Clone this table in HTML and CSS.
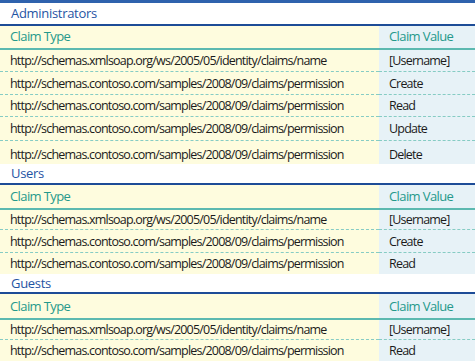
FILE: index.html
```html
<!DOCTYPE html>
<html lang="en">
	<head>
		<meta charset="UTF-8"/>
		<title>Claims</title>
		<link rel="stylesheet" href="styles.css">
	</head>
	<body>
	  <table class="claims">
		<tr class="title t1"><td colspan="2">Administrators</td></tr>
		<tr class="colhead c1"><td class="type">Claim Type</td><td class="value">Claim Value</td></tr>
		<tr class="h23"><td class="type">http://schemas.xmlsoap.org/ws/2005/05/identity/claims/name</td><td class="value">[Username]</td></tr>
		<tr class="h23"><td class="type">http://schemas.contoso.com/samples/2008/09/claims/permission</td><td class="value">Create</td></tr>
		<tr class="h22"><td class="type">http://schemas.contoso.com/samples/2008/09/claims/permission</td><td class="value">Read</td></tr>
		<tr class="h24"><td class="type">http://schemas.contoso.com/samples/2008/09/claims/permission</td><td class="value">Update</td></tr>
		<tr class="h23 last low"><td class="type">http://schemas.contoso.com/samples/2008/09/claims/permission</td><td class="value">Delete</td></tr>

		<tr class="title t2"><td colspan="2">Users</td></tr>
		<tr class="colhead c2"><td class="type">Claim Type</td><td class="value">Claim Value</td></tr>
		<tr class="h21"><td class="type">http://schemas.xmlsoap.org/ws/2005/05/identity/claims/name</td><td class="value">[Username]</td></tr>
		<tr class="h23"><td class="type">http://schemas.contoso.com/samples/2008/09/claims/permission</td><td class="value">Create</td></tr>
		<tr class="h21 last"><td class="type">http://schemas.contoso.com/samples/2008/09/claims/permission</td><td class="value">Read</td></tr>

		<tr class="title t3"><td colspan="2">Guests</td></tr>
		<tr class="colhead c3"><td class="type">Claim Type</td><td class="value">Claim Value</td></tr>
		<tr class="h21"><td class="type">http://schemas.xmlsoap.org/ws/2005/05/identity/claims/name</td><td class="value">[Username]</td></tr>
		<tr class="h22 last"><td class="type">http://schemas.contoso.com/samples/2008/09/claims/permission</td><td class="value">Read</td></tr>
	  </table>
	</body>
</html>
```

FILE: styles.css
```css
* {
  box-sizing: border-box;
}
body {
  margin: 0;
  background: #fff;
  overflow: hidden;
}
.claims {
  width: 475px;
  border-collapse: collapse;
  border-top: 3px solid #2f62ad;
  font-family: "Open Sans", sans-serif;
  font-size: 12.5px;
  letter-spacing: -0.8px;
  color: #1b1b1b;
}
td {
  padding: 0;
  white-space: nowrap;
  vertical-align: middle;
}
.type {
  width: 379px;
  padding-left: 10px;
  background-color: #fefcde;
  background-image: radial-gradient(#f1d6cf 0.5px, transparent 0.7px);
  background-size: 4px 4px;
}
.value {
  padding-left: 10px;
  background-color: #e7f2f7;
  background-image: radial-gradient(#cfe2ee 0.5px, transparent 0.7px);
  background-size: 4px 4px;
}
.title td {
  background: #fff;
  color: #1f54a3;
  font-size: 13px;
  letter-spacing: -0.3px;
  padding-left: 11px;
  border-bottom: 2px solid #1d4c97;
}
.t1 { height: 23px; }
.t2 { height: 20px; }
.t3 { height: 19px; }
.colhead td {
  color: #25998b;
  font-size: 13px;
  letter-spacing: -0.6px;
  vertical-align: bottom;
  padding-bottom: 3px;
  border-bottom: 2px solid #5cb9b0;
}
.c1 { height: 24px; }
.c2 { height: 25px; }
.c3 { height: 26px; }
.h21 td, .h22 td, .h23 td, .h24 td {
  border-bottom: 1px dashed #86ccc4;
}
.last td {
  border-bottom: none;
}
.low td {
  padding-top: 5px;
}
.h21 { height: 21px; }
.h22 { height: 22px; }
.h23 { height: 23px; }
.h24 { height: 24px; }
```
